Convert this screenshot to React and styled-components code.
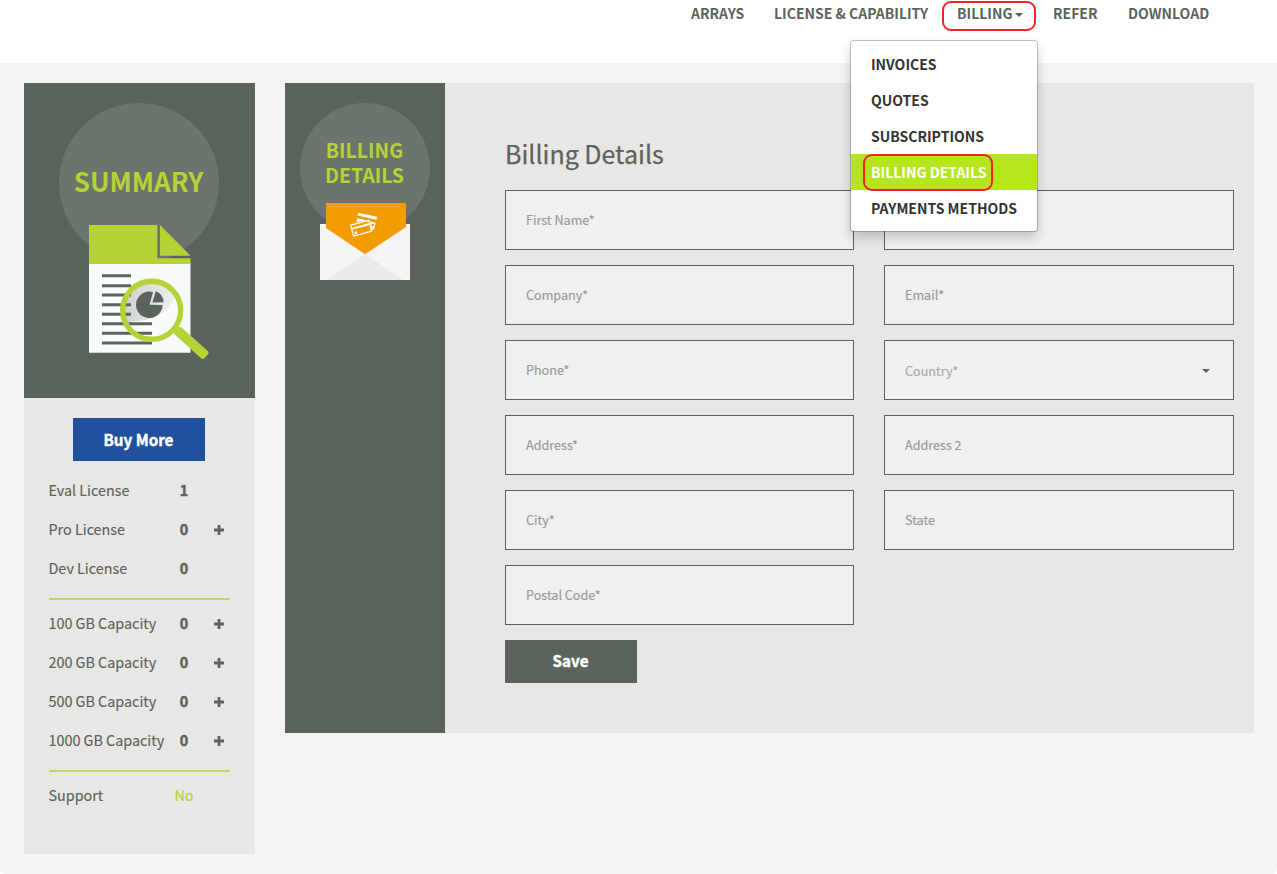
import React from "react";
import styled, { createGlobalStyle } from "styled-components";

const slate = "#5b645c";
const lime = "#b5d334";

const Global = createGlobalStyle`
  * { box-sizing: border-box; }
  body { margin: 0; background: #fff; color: ${slate}; font-family: "Noto Sans CJK SC", "Open Sans", sans-serif; font-size: 14.35px; }
  h1, ul { margin: 0; padding: 0; font-weight: inherit; list-style: none; }
`;
const Page = styled.div`height: 874px; overflow: hidden; background: #f4f4f4; border-radius: 0 0 5px 5px;`;
const Header = styled.header`height: 63px; background: #fff; display: flex; justify-content: flex-end; padding-right: 68px;`;
const Nav = styled.nav`display: flex; height: 28px; align-items: center; gap: 30px;`;
const NavLink = styled.a`
  position: relative; display: flex; align-items: center; font-size: 14px; line-height: 20px;
  font-weight: 600; white-space: nowrap; width: ${(p) => p.$w}px;
`;
const Label = styled.span`display: inline-block; padding-bottom: 2px;`;
const Caret = styled.span`
  border: 4px solid transparent; border-top-color: ${slate}; border-bottom: 0;
  margin: ${(p) => (p.$nav ? "2px 0 0 3px" : "2px 0 0")};
`;
const Marker = styled.span`
  position: absolute; border: 2px solid #ec2227; border-radius: 9px; pointer-events: none;
  left: ${(p) => p.$x}px; top: ${(p) => p.$y}px; width: ${(p) => p.$w}px; height: ${(p) => p.$h}px;
`;
const Menu = styled.ul`
  && { position: absolute; z-index: 2; left: -107px; top: 37px; width: 188px; height: 192px; padding: 5px 0;
  background: #fff; border: 1px solid rgba(0,0,0,.22); border-radius: 4px; box-shadow: 0 6px 12px rgba(0,0,0,.18); background-clip: padding-box; }
`;
const MenuItem = styled.li`
  position: relative; height: 36px; line-height: 36px; padding-left: 20px;
  color: ${(p) => (p.$active ? "#fff" : "#333")}; background: ${(p) => (p.$active ? "#b5e61d" : "transparent")};
`;
const Main = styled.main`display: flex; align-items: flex-start; gap: 30px; padding: 20px 23px 0 24px;`;
const Sidebar = styled.aside`width: 231px; height: 771px; background: #e8e7e5;`;
const Banner = styled.div`
  height: 315px; background: ${slate}; padding: 20px 1px 0 0; display: flex; flex-direction: column; align-items: center;
`;
const Disc = styled.div`
  width: ${(p) => p.$size}px; height: ${(p) => p.$size}px; border-radius: 50%; background: #6b756d; flex: none;
  display: flex; align-items: center; justify-content: center; text-align: center;
  color: ${lime}; font-weight: 700; font-size: ${(p) => p.$font}px; line-height: ${(p) => p.$lh}px; padding: 0 1px ${(p) => p.$pb || 0}px 0;
`;
const DocIcon = styled.svg`display: block; margin: -38px 0 0 20px; flex: none;`;
const MailIcon = styled.svg`display: block; margin-top: -30px; flex: none;`;
const Button = styled.button`
  display: block; width: 132px; height: 43px; border: 0; padding: 0 1px ${(p) => p.$pb || 0}px 0; color: #fff; background: ${(p) => p.$bg};
  font: 700 15.2px/41px "Noto Sans CJK SC", "Open Sans", sans-serif; -webkit-text-stroke: 0.4px #fff;
`;
const SideBody = styled.div`padding: 20px 25px 0 24.5px; & > button { margin: 0 auto 10px 24.5px; }`;
const Row = styled.div`
  display: grid; grid-template-columns: 120px 31px 30px; height: 39px; align-items: start; line-height: 37px;
  white-space: nowrap; -webkit-text-stroke: 0.15px currentColor;
`;
const Count = styled.span`
  text-align: center; font-weight: ${(p) => (p.$plain ? 400 : 700)}; color: ${(p) => (p.$plain ? lime : slate)};
  -webkit-text-stroke: ${(p) => (p.$plain ? 0.15 : 0.5)}px currentColor;
`;
const Plus = styled.svg`justify-self: end; align-self: center; margin-right: 5.5px;`;
const Rule = styled.div`height: 2px; width: 181px; margin: 10px 0 4px 0.5px; background: #c3d665;`;
const Panel = styled.section`flex: 1; height: 650px; background: #e8e7e5; display: flex;`;
const PanelSide = styled.div`width: 160px; background: ${slate}; padding-top: 20px; display: flex; flex-direction: column; align-items: center;`;
const Form = styled.form`flex: 1; padding: 47px 20px 0 60px;`;
const Title = styled.h1`&& { font-size: 25px; line-height: 46px; height: 60px; font-weight: 400; -webkit-text-stroke: 0.25px currentColor; }`;
const Fields = styled.div`display: grid; grid-template-columns: 349px 350px; gap: 15px 30px; margin-bottom: 15px;`;
const Field = styled.div`
  height: 60px; border: 1px solid ${slate}; background: #f0f0f0; padding: ${(p) => (p.$select ? "0 23px 0 20px" : "0 20px 2px")};
  display: flex; align-items: center; justify-content: space-between; font-size: 12.6px; color: ${(p) => (p.$select ? "#aaa" : "#999")};
  -webkit-text-stroke: 0.15px currentColor;
`;

const licenses = [["Eval License", 1, false], ["Pro License", 0, true], ["Dev License", 0, false]];
const capacities = [["100 GB Capacity", 0, true], ["200 GB Capacity", 0, true], ["500 GB Capacity", 0, true], ["1000 GB Capacity", 0, true]];
const fields = ["First Name*", "", "Company*", "Email*", "Phone*", "Country*", "Address*", "Address 2", "City*", "State", "Postal Code*"];

function Counter({ label, value, add }) {
  return (
    <Row>
      <span>{label}</span>
      <Count>{value}</Count>
      {add && <Plus width="10" height="10" viewBox="0 0 10 10"><path d="M0 5H10M5 0V10" stroke={slate} strokeWidth="2.8" /></Plus>}
    </Row>
  );
}

function ReportIcon() {
  return (
    <DocIcon width="120" height="135" viewBox="0 0 120 135">
      <defs>
        <linearGradient id="glare" x1="0" y1="0.4" x2="1" y2="0.5">
          <stop offset="0" stopColor="#d0d0d1" />
          <stop offset="1" stopColor="#efeff0" />
        </linearGradient>
      </defs>
      <path d="M0 38H101.500V127.700H0Z" fill="#f9fafb" />
      <path d="M0 0H68.300V33.300H101.500V39H0Z" fill={lime} />
      <path d="M71 0L101.500 30.700H71Z" fill={lime} />
      <path d="M38 97A27 27 0 1 1 86 71C82 86 66 96 38 97Z" fill="url(#glare)" />
      <path d="M13 50.700H42M13 60.700H42M13 70H42M13 79.700H42M13 89.300H42M13 98.700H63M13 108.300H63M13 117.900H63" stroke={slate} strokeWidth="3" />
      <circle cx="62.700" cy="85.300" r="29" fill="none" stroke={lime} strokeWidth="5.400" />
      <path d="M60.600 79.800L64 67A13.300 13.300 0 1 0 73.600 80Z" fill={slate} />
      <path d="M63.400 77.600L66.800 66.300A12 12 0 0 1 74.600 77.300Z" fill={slate} />
      <rect y="-5" width="40" height="10" rx="2.800" transform="translate(87.500 104.500) rotate(42)" fill={lime} />
    </DocIcon>
  );
}

function EnvelopeIcon() {
  return (
    <MailIcon width="90" height="77" viewBox="0 0 90 77">
      <path d="M0 21H90V77H0Z" fill="#f4f5f7" />
      <path d="M7 77L45 51L83 77Z" fill="#e9eaec" />
      <path d="M6 0H86V24L45 51.300L6 25Z" fill="#f39c00" />
      <path d="M38.200 9.800L57 13.800L56.500 16.800L37.500 12.500Z" fill="#fff" />
      <path d="M37.500 15.200L55.700 19.800L54.300 26L52 27L49.800 17.800L36 18.800Z" fill="#fff" />
      <circle cx="52.700" cy="22" r="1.300" fill="#f39c00" />
      <path d="M30.700 22.200L48.800 17.400L51.600 28.200L33.500 33.200Z" fill="#f39c00" stroke="#fff" strokeWidth="1.200" strokeLinejoin="round" />
      <path d="M31.600 25.800L49.600 21" stroke="#fff" strokeWidth="1.900" />
      <path d="M34.600 30L37 29.300" stroke="#fff" strokeWidth="2.400" />
    </MailIcon>
  );
}

export default function App() {
  return (
    <Page>
      <Global />
      <Header>
        <Nav>
          <NavLink $w={53}><Label>ARRAYS</Label></NavLink>
          <NavLink $w={153}><Label>LICENSE &amp; CAPABILITY</Label></NavLink>
          <NavLink $w={66}>
            <Label>BILLING</Label><Caret $nav />
            <Marker $x={-15} $y={-2} $w={94} $h={30} />
            <Menu>
              <MenuItem>INVOICES</MenuItem>
              <MenuItem>QUOTES</MenuItem>
              <MenuItem>SUBSCRIPTIONS</MenuItem>
              <MenuItem $active>BILLING DETAILS<Marker $x={12} $y={0} $w={130} $h={37} /></MenuItem>
              <MenuItem>PAYMENTS METHODS</MenuItem>
            </Menu>
          </NavLink>
          <NavLink $w={45}><Label>REFER</Label></NavLink>
          <NavLink $w={81}><Label>DOWNLOAD</Label></NavLink>
        </Nav>
      </Header>
      <Main>
        <Sidebar>
          <Banner>
            <Disc $size={160} $font={26.1} $lh={36} $pb={4}>SUMMARY</Disc>
            <ReportIcon />
          </Banner>
          <SideBody>
            <Button $bg="#21509f">Buy More</Button>
            {licenses.map(([l, v, a]) => <Counter key={l} label={l} value={v} add={a} />)}
            <Rule />
            {capacities.map(([l, v, a]) => <Counter key={l} label={l} value={v} add={a} />)}
            <Rule />
            <Row><span>Support</span><Count $plain>No</Count></Row>
          </SideBody>
        </Sidebar>
        <Panel>
          <PanelSide>
            <Disc $size={130} $font={19.5} $lh={25} $pb={12}>BILLING<br />DETAILS</Disc>
            <EnvelopeIcon />
          </PanelSide>
          <Form>
            <Title>Billing Details</Title>
            <Fields>
              {fields.map((f, i) => (
                <Field key={i} $select={f === "Country*"}>{f}{f === "Country*" && <Caret />}</Field>
              ))}
            </Fields>
            <Button type="button" $bg={slate} $pb={2}>Save</Button>
          </Form>
        </Panel>
      </Main>
    </Page>
  );
}
